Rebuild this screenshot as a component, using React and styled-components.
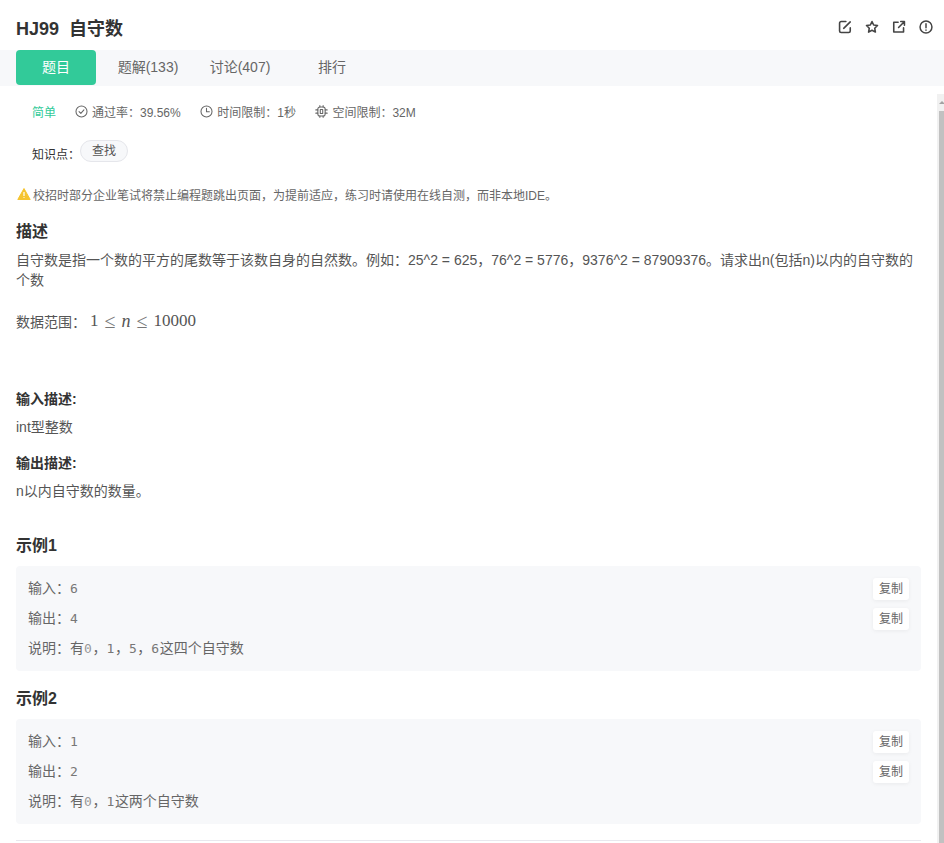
import React from 'react';
import styled, { createGlobalStyle } from 'styled-components';

const SANS = `"Liberation Sans", "Noto Sans CJK SC", sans-serif`;
const MONO = `"DejaVu Sans Mono", "Liberation Mono", "Noto Sans CJK SC", monospace`;

const GlobalStyle = createGlobalStyle`
  html, body {
    margin: 0;
    padding: 0;
    height: 843px;
    overflow: hidden;
    background: #fff;
    font-family: ${SANS};
    color: #333;
  }
`;

const Page = styled.div`
  width: 944px;
  height: 843px;
  display: flex;
  flex-direction: column;
  overflow: hidden;
`;

const Header = styled.div`
  height: 50px;
  flex: none;
  display: flex;
  align-items: center;
  justify-content: space-between;
  padding: 3px 11px 0 16px;
  box-sizing: border-box;
`;

const Title = styled.h1`
  margin: 0;
  font-size: 18px;
  font-weight: 700;
  color: #333;
  white-space: pre;
`;

const HeaderIcons = styled.div`
  display: flex;
  gap: 13px;
  color: #444;
`;

const TabBar = styled.div`
  height: 36px;
  flex: none;
  display: flex;
  background: #f7f8fa;
  padding-left: 16px;
`;

const Tab = styled.div`
  width: ${p => p.$width}px;
  height: 35px;
  line-height: 35px;
  text-align: center;
  font-size: 14px;
  border-radius: 4px;
  color: ${p => (p.$active ? '#fff' : '#666')};
  background: ${p => (p.$active ? '#32ca99' : 'transparent')};
`;

const Body = styled.div`
  flex: 1;
  display: flex;
  min-height: 0;
`;

const Content = styled.div`
  flex: 1;
  padding: 0 16px;
  min-width: 0;
`;

const Track = styled.div`
  width: 7px;
  flex: none;
  margin-top: 8px;
  padding-left: 2px;
  box-sizing: border-box;
  background: #f1f1f1;
  display: flex;
  flex-direction: column;
  align-items: center;
`;

const TrackArrow = styled.div`
  width: 0;
  height: 0;
  margin: 7px 0 7px;
  border-left: 3px solid transparent;
  border-right: 3px solid transparent;
  border-bottom: 3px solid #a3a3a3;
`;

const Thumb = styled.div`
  flex: 1;
  width: 100%;
  background: #c1c1c1;
`;

const MetaRow = styled.div`
  display: flex;
  align-items: center;
  height: 20px;
  margin-top: 15px;
  padding-left: 16px;
  font-size: 12px;
  color: #666;
`;

const Level = styled.span`
  color: #32ca99;
  margin-right: 19px;
`;

const MetaItem = styled.span`
  display: flex;
  align-items: center;
  gap: 4px;
  margin-right: 19.5px;
`;

const TagRow = styled.div`
  display: flex;
  align-items: center;
  margin-top: 20px;
  padding-left: 16px;
  height: 24px;
  font-size: 12px;
  color: #333;
`;

const Tag = styled.span`
  height: 22px;
  line-height: 20px;
  padding: 0 11px;
  margin: -4px 0 0;
  box-sizing: border-box;
  border: 1px solid #e5e6eb;
  border-radius: 11px;
  background: #f7f8fa;
  color: #555;
`;

const Notice = styled.div`
  display: flex;
  align-items: center;
  gap: 2px;
  margin-top: 19px;
  height: 20px;
  padding-left: 1px;
  font-size: 12px;
  color: #666;
`;

const SectionTitle = styled.h2`
  margin: ${p => p.$top}px 0 0;
  font-size: 16px;
  line-height: 22px;
  font-weight: 700;
  color: #333;
`;

const Paragraph = styled.p`
  margin: 7px 0 0;
  font-size: 14px;
  line-height: 20px;
  color: #555;
`;

const RangeLine = styled.div`
  display: flex;
  align-items: center;
  gap: 4px;
  margin-top: 19px;
  height: 24px;
  font-size: 14px;
  color: #555;
`;

const Formula = styled.span`
  display: flex;
  align-items: center;
  gap: 6px;
  font-family: "Liberation Serif", serif;
  font-size: 17px;
  color: #555;
`;

const FormulaRelation = styled.span`
  font-size: 20px;
  color: #777;
`;

const FormulaVar = styled.i`
  font-size: 18px;
`;

const SubTitle = styled.div`
  margin-top: ${p => p.$top}px;
  font-size: 14px;
  line-height: 20px;
  font-weight: 700;
  color: #333;
`;

const SubText = styled.div`
  margin-top: 8px;
  font-size: 14px;
  line-height: 20px;
  color: #555;
`;

const ExampleBox = styled.div`
  margin-top: 9px;
  padding: 8px 12px;
  height: 105px;
  box-sizing: border-box;
  background: #f7f8fa;
  border-radius: 4px;
`;

const ExampleRow = styled.div`
  display: flex;
  align-items: center;
  justify-content: space-between;
  height: 30px;
  font-size: 14px;
  color: #666;
`;

const RowText = styled.span`
  padding-bottom: 5px;
`;

const Mono = styled.span`
  font-family: ${MONO};
  font-size: 13px;
  letter-spacing: 0.6px;
  color: ${p => (p.$muted ? '#999' : '#777')};
`;

const CopyButton = styled.span`
  width: 36px;
  height: 22px;
  line-height: 23px;
  text-align: center;
  font-size: 12px;
  color: #666;
  background: #fff;
  border-radius: 3px;
  box-shadow: 0 1px 4px rgba(0, 0, 0, 0.06);
`;

const Divider = styled.div`
  margin-top: 16px;
  height: 1px;
  background: #e8e8ee;
`;

const Icon = ({ size = 14, weight = 1.6, children }) => (
  <svg width={size} height={size} viewBox="0 0 16 16" fill="none" stroke="currentColor" strokeWidth={weight} strokeLinecap="round" strokeLinejoin="round">
    {children}
  </svg>
);

const Example = ({ title, top, input, output, note }) => (
  <>
    <SectionTitle $top={top}>{title}</SectionTitle>
    <ExampleBox>
      <ExampleRow>
        <RowText>输入：<Mono>{input}</Mono></RowText>
        <CopyButton>复制</CopyButton>
      </ExampleRow>
      <ExampleRow>
        <RowText>输出：<Mono>{output}</Mono></RowText>
        <CopyButton>复制</CopyButton>
      </ExampleRow>
      <ExampleRow>
        <RowText>说明：{note}</RowText>
      </ExampleRow>
    </ExampleBox>
  </>
);

export default function App() {
  return (
    <Page>
      <GlobalStyle />
      <Header>
        <Title>HJ99  自守数</Title>
        <HeaderIcons>
          <Icon weight={1.8}><path d="M14 9v3.5a1.8 1.8 0 0 1-1.8 1.8H3.6a1.8 1.8 0 0 1-1.8-1.8V3.6a1.8 1.8 0 0 1 1.8-1.8H9" /><path d="M6.5 9.5 14 2.2" /></Icon>
          <Icon weight={1.8}><path d="M8 1.8l1.9 3.9 4.4.6-3.2 3.1.8 4.4L8 11.7l-3.9 2.1.8-4.4-3.2-3.1 4.4-.6z" /></Icon>
          <Icon weight={1.8}><path d="M7 2.6H2v11.2h11.2V9" /><path d="M7.5 8.5 14 2M10 1.8h4.2V6" /></Icon>
          <Icon weight={1.7}><circle cx="8" cy="8" r="6.8" /><path d="M8 4.2v4.6M8 11.3v.3" /></Icon>
        </HeaderIcons>
      </Header>
      <TabBar>
        <Tab $width={80} $active>题目</Tab>
        <Tab $width={104}>题解(133)</Tab>
        <Tab $width={80}>讨论(407)</Tab>
        <Tab $width={104}>排行</Tab>
      </TabBar>
      <Body>
        <Content>
          <MetaRow>
            <Level>简单</Level>
            <MetaItem>
              <Icon size={13} weight={1.3}><circle cx="8" cy="8" r="6.8" /><path d="M5 8.2 7.2 10.4 11 6" /></Icon>
              通过率：39.56%
            </MetaItem>
            <MetaItem>
              <Icon size={13} weight={1.3}><circle cx="8" cy="8" r="6.8" /><path d="M8 4v4.2h3.5" /></Icon>
              时间限制：1秒
            </MetaItem>
            <MetaItem>
              <Icon size={13} weight={1.3}><rect x="3.5" y="2.5" width="9" height="11" rx="2.5" /><rect x="6.5" y="5.5" width="3" height="5" /><path d="M6 .8v1.7M10 .8v1.7M6 13.5v1.7M10 13.5v1.7M1 6h2.5M1 10h2.5M12.5 6H15M12.5 10H15" /></Icon>
              空间限制：32M
            </MetaItem>
          </MetaRow>
          <TagRow>
            知识点：<Tag>查找</Tag>
          </TagRow>
          <Notice>
            <svg width="14" height="14" viewBox="0 0 14 14"><path d="M7 1.5 13.2 12.5H.8z" fill="#f5c431" stroke="#f5c431" strokeLinejoin="round" /><path d="M7 5v4M7 10.2v.9" stroke="#fff" strokeWidth="1.2" /></svg>
            校招时部分企业笔试将禁止编程题跳出页面，为提前适应，练习时请使用在线自测，而非本地IDE。
          </Notice>
          <SectionTitle $top={17}>描述</SectionTitle>
          <Paragraph>自守数是指一个数的平方的尾数等于该数自身的自然数。例如：25^2 = 625，76^2 = 5776，9376^2 = 87909376。请求出n(包括n)以内的自守数的个数</Paragraph>
          <RangeLine>
            数据范围：
            <Formula>
              <span>1</span>
              <FormulaRelation>≤</FormulaRelation>
              <FormulaVar>n</FormulaVar>
              <FormulaRelation>≤</FormulaRelation>
              <span>10000</span>
            </Formula>
          </RangeLine>
          <SubTitle $top={56}>输入描述:</SubTitle>
          <SubText>int型整数</SubText>
          <SubTitle $top={16}>输出描述:</SubTitle>
          <SubText>n以内自守数的数量。</SubText>
          <Example title="示例1" top={34} input="6" output="4"
            note={<>有<Mono $muted>0</Mono>，<Mono>1</Mono>，<Mono>5</Mono>，<Mono>6</Mono>这四个自守数</>} />
          <Example title="示例2" top={17} input="1" output="2"
            note={<>有<Mono $muted>0</Mono>，<Mono>1</Mono>这两个自守数</>} />
          <Divider />
        </Content>
        <Track>
          <TrackArrow />
          <Thumb />
        </Track>
      </Body>
    </Page>
  );
}
